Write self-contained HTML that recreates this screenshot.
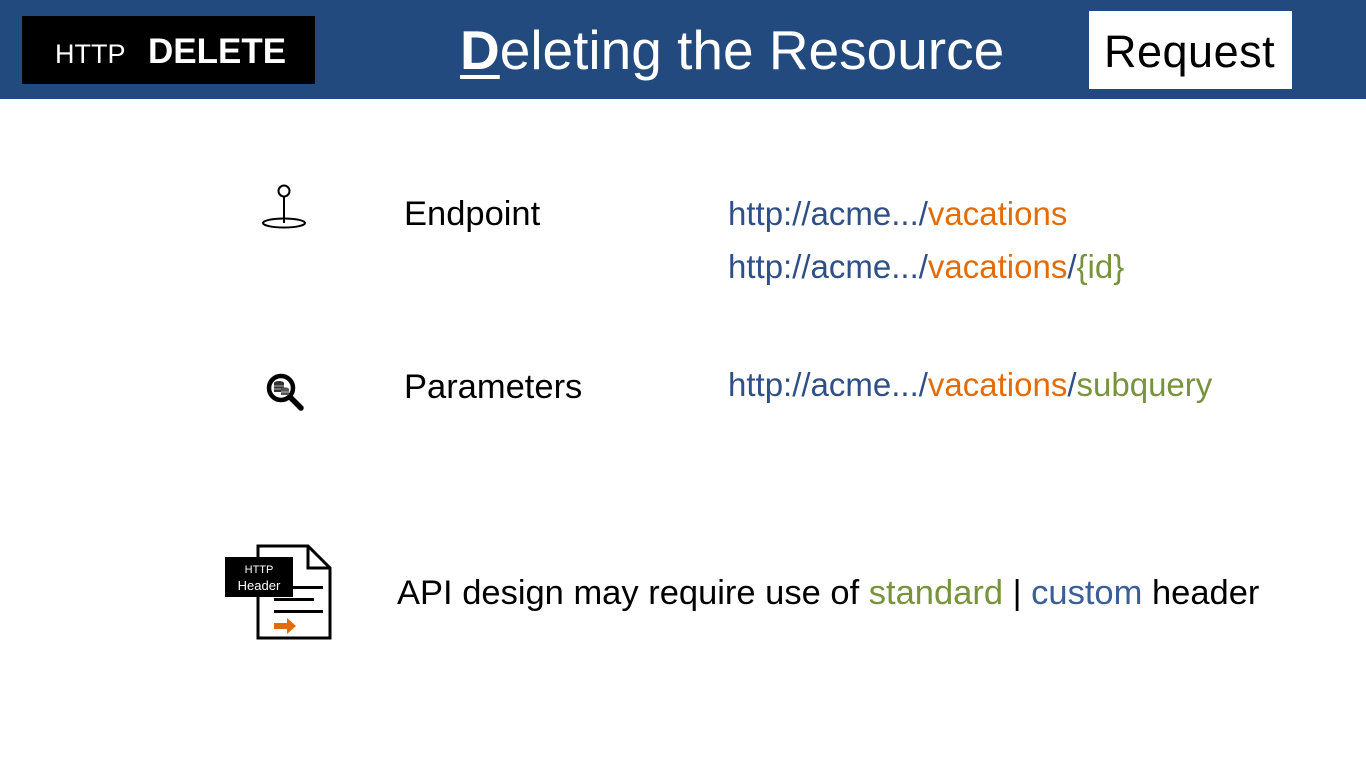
<!DOCTYPE html>
<html><head><meta charset="utf-8"><style>
html,body{margin:0;padding:0;}
body{width:1366px;height:768px;position:relative;overflow:hidden;background:#fff;font-family:"Liberation Sans",sans-serif;}
.t{position:absolute;white-space:nowrap;line-height:1;}
.hdr{position:absolute;left:0;top:0;width:1366px;height:99px;background:#234a7e;}
.b{color:#2f5086}.o{color:#e36c0a}.g{color:#77933c}
</style></head><body>
<div class="hdr"></div>
<div style="position:absolute;left:22px;top:16px;width:293px;height:68px;background:#000"></div>
<div class="t" style="left:55px;top:41px;font-size:27px;color:#fff">HTTP</div>
<div class="t" style="left:148px;top:34px;font-size:35px;color:#fff;font-weight:bold">DELETE</div>
<div class="t" style="left:460px;top:23px;font-size:55px;color:#fff"><span style="text-decoration:underline;text-decoration-thickness:4px;text-underline-offset:6px;font-weight:bold">D</span>eleting the Resource</div>
<div style="position:absolute;left:1089px;top:11px;width:203px;height:78px;background:#fff"></div>
<div class="t" style="left:1104px;top:29px;font-size:45px;color:#000;letter-spacing:0.5px">Request</div>

<svg style="position:absolute;left:258px;top:182px" width="52" height="50" viewBox="0 0 52 50">
<circle cx="26" cy="9" r="5.5" fill="none" stroke="#000" stroke-width="2"/>
<line x1="26" y1="14.5" x2="26" y2="41" stroke="#000" stroke-width="2"/>
<ellipse cx="26" cy="41" rx="21" ry="4.5" fill="none" stroke="#000" stroke-width="2"/>
</svg>
<div class="t" style="left:404px;top:197px;font-size:34.5px;color:#000">Endpoint</div>
<div class="t" style="left:728px;top:197px;font-size:33px"><span class="b">http://acme.../</span><span class="o">vacations</span></div>
<div class="t" style="left:728px;top:250px;font-size:33px"><span class="b">http://acme.../</span><span class="o">vacations</span><span class="b">/</span><span class="g">{id}</span></div>

<svg style="position:absolute;left:264px;top:372px" width="42" height="42" viewBox="0 0 42 42">
<circle cx="17" cy="16" r="12" fill="#fff" stroke="#000" stroke-width="4.5"/>
<line x1="26" y1="25" x2="37" y2="36" stroke="#000" stroke-width="5.5" stroke-linecap="round"/>
<ellipse cx="15" cy="11" rx="5" ry="2" fill="#333"/><rect x="10" y="11" width="10" height="9" fill="#333"/>
<line x1="10" y1="14" x2="20" y2="14" stroke="#ccc" stroke-width="0.8"/><line x1="10" y1="17" x2="20" y2="17" stroke="#ccc" stroke-width="0.8"/>
<ellipse cx="21" cy="17" rx="4" ry="1.6" fill="#555"/><rect x="17" y="17" width="8" height="6" fill="#555"/>
<line x1="17" y1="20" x2="25" y2="20" stroke="#ccc" stroke-width="0.8"/>
</svg>
<div class="t" style="left:404px;top:370px;font-size:34.5px;color:#000">Parameters</div>
<div class="t" style="left:728px;top:368px;font-size:33px"><span class="b">http://acme.../</span><span class="o">vacations</span><span class="b">/</span><span class="g">subquery</span></div>

<svg style="position:absolute;left:224px;top:543px" width="110" height="100" viewBox="0 0 110 100">
<path d="M34 3 H84 L106 25 V95 H34 Z" fill="#fff" stroke="#000" stroke-width="3"/>
<path d="M84 3 V25 H106" fill="none" stroke="#000" stroke-width="3"/>
<rect x="1" y="14" width="68" height="40" fill="#000"/>
<text x="35" y="30" font-family="Liberation Sans,sans-serif" font-size="11" fill="#fff" text-anchor="middle">HTTP</text>
<text x="35" y="47" font-family="Liberation Sans,sans-serif" font-size="13" fill="#fff" text-anchor="middle">Header</text>
<rect x="69" y="43" width="30" height="3" fill="#000"/>
<rect x="50" y="55" width="40" height="3" fill="#000"/>
<rect x="50" y="67" width="49" height="3" fill="#000"/>
<path d="M50 80 H63 V75 L72 83 L63 91 V86 H50 Z" fill="#e36c0a"/>
</svg>
<div class="t" style="left:397px;top:576px;font-size:34.5px;color:#000">API design may require use of <span class="g">standard</span> | <span style="color:#3a5e96">custom</span> header</div>
</body></html>
